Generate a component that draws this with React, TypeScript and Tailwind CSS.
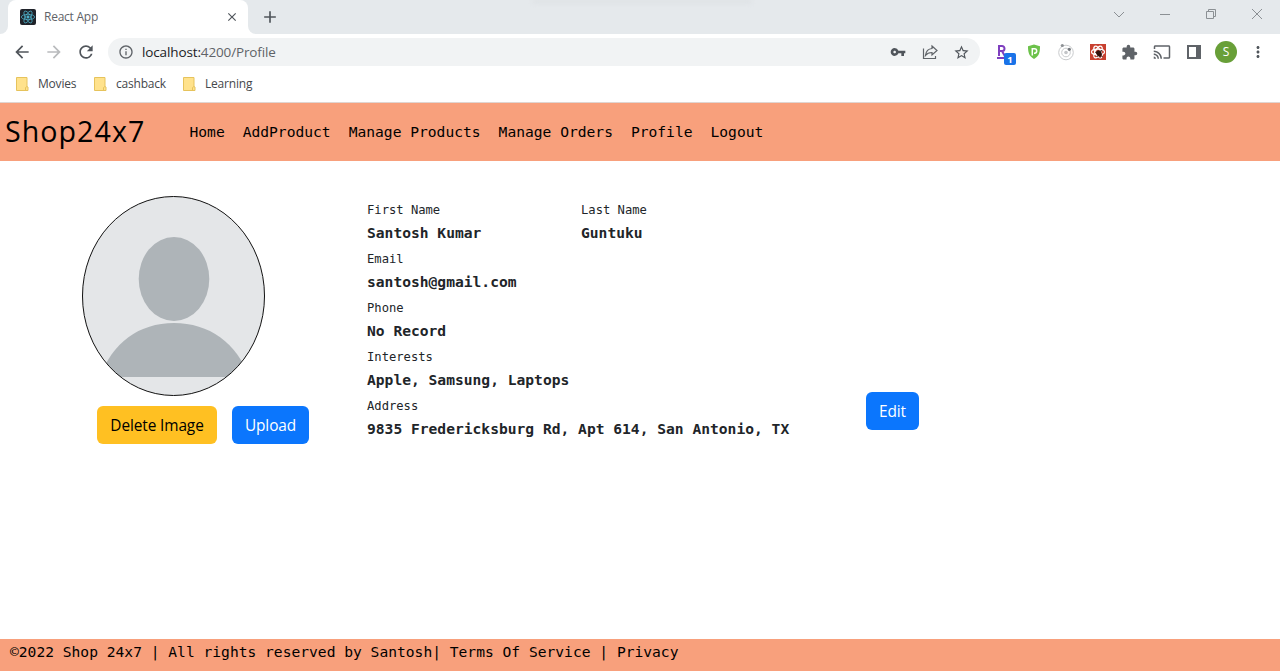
import React from "react";
import {
  MdAdd,
  MdArrowBack,
  MdArrowForward,
  MdCast,
  MdClose,
  MdExtension,
  MdMoreVert,
  MdOutlineInfo,
  MdRefresh,
  MdStarBorder,
  MdVpnKey,
} from "react-icons/md";

function Atom({ className }: { className: string }) {
  return (
    <svg viewBox="-12 -12 24 24" className={className} fill="none" stroke="currentColor" strokeWidth="1.1">
      <ellipse rx="10" ry="4" />
      <ellipse rx="10" ry="4" transform="rotate(60)" />
      <ellipse rx="10" ry="4" transform="rotate(120)" />
      <circle r="1.8" fill="currentColor" />
    </svg>
  );
}

function TabStrip() {
  return (
    <div className="flex h-[34px] shrink-0 bg-[#e5e9ec]">
      <div className="flex w-2 items-end bg-white">
        <div className="h-full w-2 rounded-br-lg bg-[#e5e9ec]" />
      </div>
      <div className="flex w-60 items-center rounded-t-lg bg-white pr-[9px] pl-3">
        <div className="flex size-4 items-center justify-center rounded-xs bg-[#20232a]">
          <Atom className="size-4 text-[#4fb3cc]" />
        </div>
        <span className="ml-2 flex-1 text-[12px] tracking-[-0.25px] text-[#5f6368]">React App</span>
        <MdClose className="size-3.5 text-[#50555b]" />
      </div>
      <div className="flex w-2 items-end bg-white">
        <div className="h-full w-2 rounded-bl-lg bg-[#e5e9ec]" />
      </div>
      <div className="flex w-7 items-center justify-center">
        <MdAdd className="size-5 text-[#50555b]" />
      </div>
      <div className="flex-1 pl-[248px]">
        <div className="h-[3px] w-[220px] rounded-b bg-[#dce0e3] blur-[2px]" />
      </div>
      <div className="flex w-[184px] items-start pt-[7px] text-[#8b9094]">
        <svg viewBox="0 0 46 14" className="h-3.5 w-[46px]" fill="none" stroke="currentColor">
          <path d="m18 5 5 5 5-5" />
        </svg>
        <svg viewBox="0 0 46 14" className="h-3.5 w-[46px]" fill="none" stroke="currentColor">
          <path d="M18 7.5h10" />
        </svg>
        <svg viewBox="0 0 46 14" className="h-3.5 w-[46px]" fill="none" stroke="currentColor">
          <path d="M18.5 4.5h7v7h-7zM20.500 4.500v-2h7v7h-2" />
        </svg>
        <svg viewBox="0 0 46 14" className="h-3.5 w-[46px]" fill="none" stroke="currentColor">
          <path d="m18 2 10 10m0-10-10 10" />
        </svg>
      </div>
    </div>
  );
}

function Extensions() {
  return (
    <>
      <svg viewBox="0 0 20 22" className="mt-[5px] ml-4 h-[22px] w-5 shrink-0">
        <path d="M3 12V2h3a2.500 2.500 0 0 1 0 5H3m3 0 2.800 5M1 14h8" fill="none" stroke="#7f3fbf" strokeWidth="2" />
        <rect x="8" y="9" width="12" height="12" rx="2" fill="#1a73e8" />
        <text x="14" y="18.500" textAnchor="middle" fontSize="9.500" fontWeight="700" fill="#fff" fontFamily="Open Sans, sans-serif">1</text>
      </svg>
      <svg viewBox="0 0 16 18" className="ml-[10px] h-[18px] w-4 shrink-0">
        <path d="M8 1.500 14 3.300c0 6-.7 9.700-6 12.700-5.300-3-6-6.700-6-12.700z" fill="#6cc24a" />
        <path d="M6.300 12.500V5.800h2.200a2.100 2.100 0 0 1 0 4.400H8" fill="none" stroke="#fff" strokeWidth="1.500" />
      </svg>
      <svg viewBox="0 0 18 18" className="ml-[15px] size-[18px] shrink-0" fill="none">
        <circle cx="9" cy="9.500" r="7.300" stroke="#c9cbcd" />
        <circle cx="9" cy="9.500" r="4.300" stroke="#c9cbcd" />
        <circle cx="9" cy="9.500" r="1.800" fill="#c2c4c7" />
        <circle cx="5.300" cy="2.500" r="1.600" fill="#8d9195" />
        <circle cx="12.300" cy="6.300" r="1.600" fill="#74787d" />
      </svg>
      <div className="ml-[15px] flex size-4 shrink-0 items-center justify-center bg-[#c8402f]">
        <svg viewBox="0 0 16 16" className="size-4" fill="none">
          <g stroke="#fff" strokeWidth="1.200">
            <ellipse cx="8" cy="8" rx="6.500" ry="2.800" />
            <ellipse cx="8" cy="8" rx="6.500" ry="2.800" transform="rotate(60 8 8)" />
            <ellipse cx="8" cy="8" rx="6.500" ry="2.800" transform="rotate(120 8 8)" />
          </g>
          <ellipse cx="9" cy="9.500" rx="2.500" ry="3.300" transform="rotate(-35 9 9.500)" fill="#30120e" />
          <path d="m5 8 8 5M7 13l5-7M10 14l1-8" stroke="#30120e" strokeWidth=".8" />
        </svg>
      </div>
      <MdExtension className="ml-[15px] size-[17px] shrink-0 text-[#5f6368]" />
      <MdCast className="ml-[15px] size-[18px] shrink-0 text-[#5f6368]" />
      <svg viewBox="0 0 14 14" className="ml-4 size-3.5 shrink-0">
        <path d="M0 0h14v14H0zM2 2v10h7V2z" fill="#5f6368" fillRule="evenodd" />
      </svg>
      <div className="ml-[14px] flex size-[22px] shrink-0 items-center justify-center rounded-full bg-[#689f38] text-[12px] text-white">S</div>
      <MdMoreVert className="ml-[12px] size-[18px] shrink-0 text-[#50555b]" />
    </>
  );
}

function Toolbar() {
  return (
    <div className="flex h-9 shrink-0 items-center bg-white pl-3">
      <MdArrowBack className="size-5 text-[#50555b]" />
      <MdArrowForward className="ml-3 size-5 text-[#b9bbbd]" />
      <MdRefresh className="ml-3 size-5 text-[#50555b]" />
      <div className="ml-3 flex h-7 w-[872px] items-center rounded-full bg-[#f1f3f4] pl-[10px]">
        <MdOutlineInfo className="size-4 text-[#5f6368]" />
        <span className="ml-2 flex-1 text-[13.5px] tracking-[-0.13px] text-[#5f6368]">
          <span className="text-[#202124]">localhost:</span>4200/Profile
        </span>
        <MdVpnKey className="size-4 text-[#50555b]" />
        <svg viewBox="0 0 16 16" className="ml-4 size-4" fill="none" stroke="#5f6368" strokeWidth="1.200">
          <path d="M1.500 4.500v10h12V12M10 2l5 4.500L10 11V8.500c-3 0-5 .8-6.500 2.800C4 7.500 6 4.800 10 4.500z" />
        </svg>
        <MdStarBorder className="mr-[10px] ml-[15px] size-[17px] text-[#50555b]" />
      </div>
      <Extensions />
    </div>
  );
}

function Bookmark({ label, className }: { label: string; className: string }) {
  return (
    <div className={`flex items-center gap-[9px] ${className}`}>
      <svg viewBox="0 0 13 14" className="h-3.5 w-[13px]">
        <path d="M.5.5h10.500v9l1 .5v3.500H.5z" fill="#ffe28c" stroke="#e6c35c" />
        <path d="M9.500 13.500v-3l1.500-1" fill="none" stroke="#e6c35c" />
      </svg>
      <span className="text-[12px] tracking-[-0.2px] whitespace-nowrap text-[#45484c]">{label}</span>
    </div>
  );
}

function Field({ label, value, className = "" }: { label: string; value: string; className?: string }) {
  return (
    <div className={`h-[49px] whitespace-nowrap ${className}`}>
      <div className="h-[22px] text-[12.17px] leading-[22px]">{label}</div>
      <div className="h-6 text-[14.62px] leading-6 font-bold">{value}</div>
    </div>
  );
}

const buttonBase = "h-[38px] rounded-md pt-[2px] text-[15.4px] tracking-[-0.1px] whitespace-nowrap";
const mono = "font-['DejaVu_Sans_Mono','Liberation_Mono',monospace]";

export default function App() {
  return (
    <div className="flex h-[671px] w-[1280px] flex-col overflow-hidden bg-white font-['Open_Sans','Noto_Sans',sans-serif]">
      <TabStrip />
      <Toolbar />
      <div className="flex h-8 shrink-0 items-center bg-white pl-4 pb-[4px]">
        <Bookmark label="Movies" className="w-[78px]" />
        <Bookmark label="cashback" className="w-[89px]" />
        <Bookmark label="Learning" className="" />
      </div>

      <nav className={`flex h-[59px] shrink-0 items-center border-t border-[#e0d5d1] bg-[#f8a07c] pl-[5px] text-black ${mono}`}>
        <span className="w-[184.500px] pb-[1px] font-['Open_Sans','Noto_Sans',sans-serif] text-[28.6px] tracking-[1.050px]">Shop24x7</span>
        <div className="flex gap-[18px] text-[14.62px] whitespace-nowrap">
          <a>Home</a>
          <a>AddProduct</a>
          <a>Manage Products</a>
          <a>Manage Orders</a>
          <a>Profile</a>
          <a>Logout</a>
        </div>
      </nav>

      <main className="flex flex-1 items-start text-[#212529]">
        <section className="w-[367px] pt-[35px] pl-[82px]">
          <svg viewBox="0 0 183 200" className="h-[200px] w-[183px]">
            <defs>
              <clipPath id="avatar">
                <ellipse cx="91.500" cy="100" rx="91" ry="99.500" />
              </clipPath>
            </defs>
            <g clipPath="url(#avatar)">
              <rect width="183" height="200" fill="#e4e6e8" />
              <ellipse cx="92" cy="83" rx="35.300" ry="42" fill="#aeb4b8" />
              <path d="M18 181C30 147 57 127 92 127s63 20 75 54z" fill="#aeb4b8" />
            </g>
            <ellipse cx="91.500" cy="100" rx="91" ry="99.500" fill="none" stroke="#111" />
          </svg>
          <div className="mt-[10px] flex gap-[15px] pl-[15px]">
            <button className={`w-[120px] bg-[#ffc022] text-black ${buttonBase}`}>Delete Image</button>
            <button className={`w-[77px] bg-[#0b76fd] text-white ${buttonBase}`}>Upload</button>
          </div>
        </section>

        <section className={`w-[499px] pt-[38px] ${mono}`}>
          <div className="flex">
            <Field label="First Name" value="Santosh Kumar" className="w-[214px]" />
            <Field label="Last Name" value="Guntuku" />
          </div>
          <Field label="Email" value="santosh@gmail.com" />
          <Field label="Phone" value="No Record" />
          <Field label="Interests" value="Apple, Samsung, Laptops" />
          <Field label="Address" value="9835 Fredericksburg Rd, Apt 614, San Antonio, TX" />
        </section>

        <div className="pt-[231px]">
          <button className={`w-[53px] bg-[#0b76fd] text-white ${buttonBase}`}>Edit</button>
        </div>
      </main>

      <footer className={`h-8 shrink-0 bg-[#f8a07c] pl-[10px] text-[14.62px] leading-[26px] text-black whitespace-pre ${mono}`}>
        ©2022 Shop 24x7 | All rights reserved by Santosh| Terms Of Service | Privacy
      </footer>
    </div>
  );
}
